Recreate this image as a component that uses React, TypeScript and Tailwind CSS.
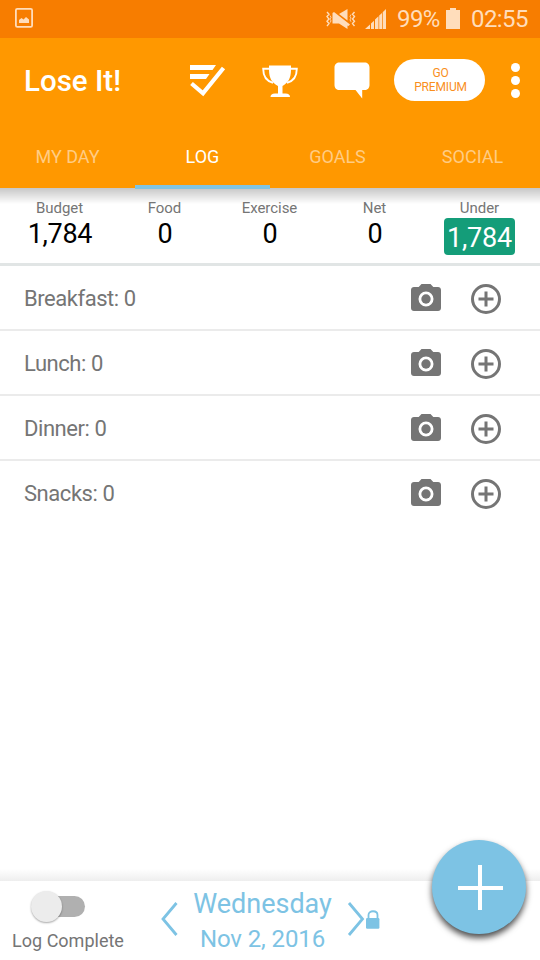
const stats = [
  { label: 'Budget', value: '1,784' },
  { label: 'Food', value: '0' },
  { label: 'Exercise', value: '0' },
  { label: 'Net', value: '0' },
  { label: 'Under', value: '1,784', highlight: true },
];

const meals = ['Breakfast: 0', 'Lunch: 0', 'Dinner: 0', 'Snacks: 0'];

const tabs = ['MY DAY', 'LOG', 'GOALS', 'SOCIAL'];

function StatusBar() {
  return (
    <div className="h-[38px] shrink-0 bg-[#f77d00] text-[#ffddbb] flex items-center pl-[15px] pr-3">
      <svg className="w-[18px] h-5 mt-[-2px]" viewBox="0 0 18 20" fill="none">
        <rect x="0.9" y="0.9" width="16.2" height="18" rx="1.4" stroke="currentColor" strokeWidth="1.8" />
        <path d="M4 15v-3l2.500-2 2 1.500L11 9l3 2.500V15z" fill="currentColor" />
      </svg>
      {/* Vibrate / muted */}
      <svg className="w-[30px] h-5 ml-auto mt-[-1px]" viewBox="0 0 30 20" fill="currentColor">
        <path d="M13 5L21.500 0v11.500z" />
        <path d="M6.500 4L8 3l16 12.500-1.500 1.500-1-.5V20L13 14.500H6.500z" />
        <path d="M1 3l2 2.3L1 7.600 3 10l-2 2.300 2 2.300L1 17M28.500 3l-2 2.300 2 2.300-2 2.400 2 2.300-2 2.300 2 2.400" fill="none" stroke="currentColor" strokeWidth="1.400" />
        <path d="M4 6.500l1 1.800-1 1.800 1 1.800-1 1.800M25 5.500l-1 1.800 1 1.800-1 1.800 1 1.800" fill="none" stroke="currentColor" strokeWidth="0.900" />
      </svg>
      {/* Signal */}
      <svg className="w-[21px] h-5 ml-[9px] mt-[-1px]" viewBox="0 0 21 20" fill="currentColor">
        <path d="M0 20l5-4.600V20zM6 14.500l3-2.800V20H6zM10 10.500l3.500-3.300V20H10zM14.200 6.500L17 4v16h-2.800zM17.700 3.200L21 0v20h-3.300z" />
      </svg>
      <span className="ml-[11px] w-[43px] text-[24px] leading-[38px] tracking-[-0.6px] whitespace-nowrap">99%</span>
      <svg className="w-[14px] h-[21px] ml-[6px] mt-[-2px]" viewBox="0 0 14 21" fill="currentColor">
        <path d="M4 0h6v2h4v19H0V2h4z" />
      </svg>
      <span className="ml-[11px] w-[57px] text-[24px] leading-[38px] tracking-[-0.6px] whitespace-nowrap">02:55</span>
    </div>
  );
}

function Toolbar() {
  return (
    <div className="h-[86px] flex items-center pl-6 text-white">
      <h1 className="w-[159px] text-[29.500px] leading-[36px] font-medium">Lose It!</h1>
      <svg className="w-12 h-12 shrink-0 mt-[-2px]" viewBox="0 0 48 48" fill="currentColor">
        <path d="M7 9h26l-3.500 5H7zM7 18h19.500l-3.500 5H7z" />
        <path d="M8.500 27.500L20 37.300 40.500 12" fill="none" stroke="currentColor" strokeWidth="4.200" />
      </svg>
      <svg className="w-12 h-12 shrink-0 ml-[25px] mt-[-2px]" viewBox="0 0 48 48" fill="currentColor">
        <path d="M13 9.500h22v4.500c0 8-3 13-8.500 16v7.500h3c3 0 4.500 1.500 4.500 3.500H14.500c0-2 1.500-3.500 4.500-3.500h3V30c-6-3-9-8-9-16z" />
        <path d="M13.500 12.800H7.200c0 8.500 3.200 12.400 9.800 14M34.500 12.800h6.300c0 8.500-3.200 12.400-9.800 14" fill="none" stroke="currentColor" strokeWidth="1.900" />
      </svg>
      <svg className="w-12 h-12 shrink-0 ml-[23px] mt-[-2px]" viewBox="0 0 48 48" fill="currentColor">
        <path d="M12.500 6.500h25c3 0 5 2 5 5v17.500c0 3-2 5-5 5h-2.300v8.500L28.500 34h-16c-3 0-5-2-5-5V11.500c0-3 2-5 5-5z" />
      </svg>
      <button className="ml-[19px] mt-[-2px] w-[91px] h-[42px] shrink-0 rounded-full bg-white text-[#f98f1d] text-[12px] leading-[14px] tracking-[-0.15px] pl-0.5">
        GO
        <br />
        PREMIUM
      </button>
      <div className="ml-[26px] mt-[-2px] flex flex-col gap-1">
        <span className="w-[9px] h-[9px] rounded-full bg-white" />
        <span className="w-[9px] h-[9px] rounded-full bg-white" />
        <span className="w-[9px] h-[9px] rounded-full bg-white" />
      </div>
    </div>
  );
}

function CameraIcon() {
  return (
    <svg className="w-[30px] h-[27px]" viewBox="0 0 30 27" fill="currentColor">
      <path
        fillRule="evenodd"
        d="M10.500 0h9l2.800 3H27c1.700 0 3 1.300 3 3v18c0 1.700-1.300 3-3 3H3c-1.700 0-3-1.300-3-3V6c0-1.700 1.300-3 3-3h4.700zM15 7.500a7.500 7.500 0 1 0 0 15 7.500 7.500 0 0 0 0-15z"
      />
      <circle cx="15" cy="15" r="4.700" />
    </svg>
  );
}

function AddIcon() {
  return (
    <svg className="w-[30px] h-[30px]" viewBox="0 0 30 30" fill="none" stroke="currentColor" strokeWidth="3">
      <circle cx="15" cy="15" r="13.500" />
      <path d="M15 7.500v15M7.500 15h15" />
    </svg>
  );
}

export default function App() {
  return (
    <div className="relative w-[540px] h-[960px] overflow-hidden bg-white flex flex-col font-[Roboto,sans-serif]">
      <StatusBar />

      {/* Header */}
      <header className="relative z-10 h-[150px] shrink-0 bg-[#ff9800]">
        <Toolbar />
        <nav className="grid grid-cols-4 h-16">
          {tabs.map((tab) => (
            <div
              key={tab}
              className={
                tab === 'LOG'
                  ? 'text-center text-[18px] leading-[66px] text-white border-b-4 border-[#80c4e3] h-[65px]'
                  : 'text-center text-[18px] leading-[66px] text-[#ffcc84] h-16'
              }
            >
              {tab}
            </div>
          ))}
        </nav>
        <div className="absolute top-full left-0 -z-10 w-full h-4 bg-gradient-to-b from-black/22 to-transparent" />
      </header>

      {/* Daily totals */}
      <section className="h-[78px] shrink-0 border-b-[3px] border-[#e1e5e5] pl-[7px] pr-2 pt-[11px] grid grid-cols-5">
        {stats.map((stat) => (
          <div key={stat.label} className="relative z-10 flex flex-col items-center">
            <span className="text-[15px] leading-[18px] tracking-[-0.05px] text-[#757575]">{stat.label}</span>
            {stat.highlight ? (
              <span className="mt-px w-[71px] h-[37px] rounded-[4px] bg-[#149d79] text-white text-[27px] leading-[40px] tracking-[-0.2px] text-center">
                {stat.value}
              </span>
            ) : (
              <span className="pl-px text-[27px] leading-[34px] tracking-[-0.3px] text-black">{stat.value}</span>
            )}
          </div>
        ))}
      </section>

      {/* Meals */}
      <main className="grow">
        {meals.map((meal, i) => (
          <div
            key={meal}
            className={
              i < meals.length - 1
                ? 'h-[65px] border-b-2 border-[#ebebeb] flex items-center pl-6 pr-[39px] text-[#757575]'
                : 'h-[65px] border-b-2 border-transparent flex items-center pl-6 pr-[39px] text-[#757575]'
            }
          >
            <span className="grow text-[22px] leading-[30px] tracking-[-0.450px] pt-[3px]">{meal}</span>
            <CameraIcon />
            <div className="ml-[30px] pt-[3px]">
              <AddIcon />
            </div>
          </div>
        ))}
      </main>

      {/* Footer */}
      <div className="h-3 shrink-0 bg-gradient-to-b from-white to-[#eeeeee]" />
      <footer className="h-[79px] shrink-0 bg-white flex">
        <div className="w-[136px] flex flex-col items-center">
          <div className="relative mt-[15px] mr-5 w-[54px] h-[21px] flex justify-end">
            <div className="w-[44px] h-[21px] rounded-full bg-[#b0b0b0]" />
            <div className="absolute left-0 top-[-5px] w-[31px] h-[31px] rounded-full bg-[#ececec] shadow-[0_1px_2px_rgba(0,0,0,0.35)]" />
          </div>
          <span className="mt-[13px] text-[18px] leading-[22px] text-[#757575]">Log Complete</span>
        </div>
        <div className="flex items-start text-[#7dc3e4]">
          <svg className="w-[18px] h-[36px] mt-5 ml-[24px]" viewBox="0 0 18 36" fill="none" stroke="currentColor" strokeWidth="2.800">
            <path d="M16.500 2L3 18l13.500 16" />
          </svg>
          <div className="w-[169px] text-center">
            <div className="text-[27px] leading-[34px] mt-[6px]">Wednesday</div>
            <div className="text-[24px] leading-[34px] mt-px tracking-[-0.1px]">Nov 2, 2016</div>
          </div>
          <svg className="w-[18px] h-[36px] mt-5" viewBox="0 0 18 36" fill="none" stroke="currentColor" strokeWidth="2.800">
            <path d="M2 2l13.500 16L2 34" />
          </svg>
          <svg className="w-[14px] h-[19px] mt-[29px] ml-px" viewBox="0 0 14 19">
            <path d="M2.500 9V5c0-5 9-5 9 0v4" fill="none" stroke="currentColor" strokeWidth="1.800" />
            <rect x="0" y="8" width="13.400" height="10.800" rx="1.200" fill="currentColor" />
          </svg>
        </div>
      </footer>

      {/* Floating add button */}
      <button className="absolute left-[432px] top-[840px] w-[94px] h-[94px] rounded-full bg-[#7dc3e4] shadow-[0_4px_6px_rgba(0,0,0,0.7)] flex items-center justify-center">
        <svg className="w-[46px] h-[46px] ml-1 mt-px" viewBox="0 0 46 46" fill="none" stroke="white" strokeWidth="4">
          <path d="M22 0v45M0 23h45" />
        </svg>
      </button>
    </div>
  );
}
